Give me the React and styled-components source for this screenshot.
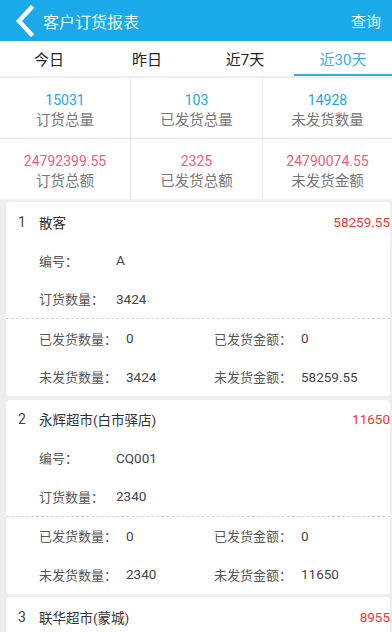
import React from 'react'
import styled, { createGlobalStyle } from 'styled-components'

const GlobalStyle = createGlobalStyle`
  html, body {
    margin: 0;
    padding: 0;
    background: #eeeeee;
    font-family: Roboto, "Noto Sans CJK SC", "Noto Sans", sans-serif;
  }
  * { box-sizing: border-box; }
`

const tabs = ['今日', '昨日', '近7天', '近30天']

const stats = [
  { value: '15031', label: '订货总量', tone: 'blue' },
  { value: '103', label: '已发货总量', tone: 'blue' },
  { value: '14928', label: '未发货数量', tone: 'blue' },
  { value: '24792399.55', label: '订货总额', tone: 'red' },
  { value: '2325', label: '已发货总额', tone: 'red' },
  { value: '24790074.55', label: '未发货金额', tone: 'red' },
]

const customers = [
  { no: 1, name: '散客', amount: '58259.55', code: 'A', qty: '3424', sentQty: '0', sentAmt: '0', leftQty: '3424', leftAmt: '58259.55' },
  { no: 2, name: '永辉超市(白市驿店)', amount: '11650', code: 'CQ001', qty: '2340', sentQty: '0', sentAmt: '0', leftQty: '2340', leftAmt: '11650' },
  { no: 3, name: '联华超市(蒙城)', amount: '8955', code: 'B', qty: '1800', sentQty: '0', sentAmt: '0', leftQty: '1800', leftAmt: '8955' },
]

export default function App() {
  return (
    <Page>
      <GlobalStyle />
      <Header>
        <BackIcon width="22" height="32" viewBox="0 0 22 32">
          <polyline points="17,3 5,16 17,29" fill="none" stroke="#fff" strokeWidth="4.5" strokeLinecap="square" strokeLinejoin="miter" />
        </BackIcon>
        <Title>客户订货报表</Title>
        <Action>查询</Action>
      </Header>
      <Tabs>
        {tabs.map((t, i) => (
          <Tab key={t} active={i === 3}>{t}</Tab>
        ))}
      </Tabs>
      <StatGrid>
        {stats.map((s) => (
          <Stat key={s.label}>
            <StatValue tone={s.tone}>{s.value}</StatValue>
            <StatLabel>{s.label}</StatLabel>
          </Stat>
        ))}
      </StatGrid>
      <List>
        {customers.map((c) => (
          <Card key={c.no}>
            <CardHead>
              <Index>{c.no}</Index>
              <Name>{c.name}</Name>
              <Amount>{c.amount}</Amount>
            </CardHead>
            <Row>
              <Label w={77}>编号：</Label>
              <Value>{c.code}</Value>
            </Row>
            <Row>
              <Label w={77}>订货数量：</Label>
              <Value>{c.qty}</Value>
            </Row>
            <Dashed />
            <Row>
              <Half>
                <Label w={87}>已发货数量：</Label>
                <Value>{c.sentQty}</Value>
              </Half>
              <Half>
                <Label w={87}>已发货金额：</Label>
                <Value>{c.sentAmt}</Value>
              </Half>
            </Row>
            <Row>
              <Half>
                <Label w={87}>未发货数量：</Label>
                <Value>{c.leftQty}</Value>
              </Half>
              <Half>
                <Label w={87}>未发货金额：</Label>
                <Value>{c.leftAmt}</Value>
              </Half>
            </Row>
          </Card>
        ))}
      </List>
    </Page>
  )
}

/* ------- STYLING ------- */

const Page = styled.div`
  width: 392px;
  height: 632px;
  overflow: hidden;
  background: #eeeeee;
`
const Header = styled.header`
  height: 41px;
  background: #1aaaea;
  display: flex;
  align-items: center;
  padding: 0 11px 0 14px;
  color: #fff;
`
const BackIcon = styled.svg`
  display: block;
  margin-right: 7px;
`
const Title = styled.div`
  flex: 1;
  font-size: 16px;
  color: #e8f6fd;
`
const Action = styled.div`
  font-size: 15px;
  color: #e8f6fd;
`
const Tabs = styled.nav`
  height: 35px;
  background: #fff;
  display: flex;
  margin-bottom: 2px;
`
const Tab = styled.div`
  flex: 1;
  display: flex;
  align-items: center;
  justify-content: center;
  font-size: 15px;
  color: ${(p) => (p.active ? '#3aaee4' : '#222')};
  border-bottom: 2px solid ${(p) => (p.active ? '#3aaee4' : 'transparent')};
  padding-top: 2px;
`
const StatGrid = styled.section`
  display: grid;
  grid-template-columns: 131px 132px 1fr;
  background: #fff;
`
const Stat = styled.div`
  height: 61px;
  padding-top: 5px;
  display: flex;
  flex-direction: column;
  align-items: center;
  justify-content: center;
  border-right: 1px solid #ececec;
  border-bottom: 1px solid #ececec;
  &:nth-child(3n) { border-right: none; }
  &:nth-child(n + 4) { border-bottom: none; height: 60px; }
`
const StatValue = styled.div`
  font-size: 14px;
  line-height: 19px;
  color: ${(p) => (p.tone === 'red' ? '#f1607a' : '#26a7e0')};
`
const StatLabel = styled.div`
  font-size: 14.5px;
  line-height: 21px;
  color: #777;
`
const List = styled.div`
  padding: 3px 2px 0 6px;
  display: flex;
  flex-direction: column;
  gap: 3.5px;
`
const Card = styled.article`
  background: #fff;
  border-radius: 4px;
`
const CardHead = styled.div`
  height: 39px;
  display: flex;
  align-items: center;
  padding-left: 12px;
`
const Index = styled.span`
  width: 21px;
  font-size: 14px;
  color: #444;
`
const Name = styled.span`
  flex: 1;
  font-size: 13.5px;
  color: #333;
`
const Amount = styled.span`
  font-size: 13.5px;
  color: #f23434;
`
const Row = styled.div`
  height: 38.5px;
  display: flex;
  align-items: center;
  padding-left: 33px;
`
const Half = styled.div`
  width: 175px;
  display: flex;
  align-items: center;
`
const Label = styled.span`
  width: ${(p) => p.w}px;
  font-size: 13px;
  color: #555;
  white-space: nowrap;
`
const Value = styled.span`
  font-size: 13.5px;
  color: #444;
`
const Dashed = styled.div`
  border-top: 1px dashed #d6d6d6;
`
